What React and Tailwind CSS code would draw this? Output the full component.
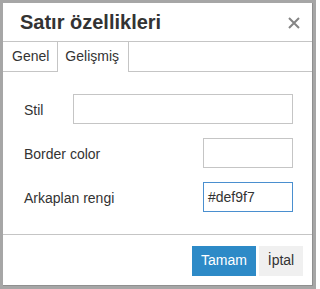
import React from "react";

export default function App() {
  return (
    <div className="w-[316px] h-[289px] bg-[#a6a6a6] p-[3px] font-['Liberation_Sans',Arial,sans-serif]">
      <div className="w-[310px] h-[283px] bg-white flex flex-col text-[#333] border-r border-b border-[#8f8f8f]">
        {/* Header */}
        <div className="h-[39px] shrink-0 flex items-center justify-between pl-[17px] pr-[12px] border-b border-[#c5c5c5]">
          <div className="text-[20px] font-bold leading-none text-[#333]">Satır özellikleri</div>
          <svg width="12" height="12" viewBox="0 0 12 12" className="mt-[1px]">
            <path d="M1 1 L11 11 M11 1 L1 11" stroke="#858585" strokeWidth="2" />
          </svg>
        </div>
        {/* Tabs */}
        <div className="h-[30px] shrink-0 flex">
          <div className="h-[30px] flex items-center pl-[9px] pr-[8px] border-r border-b border-[#c5c5c5] text-[14px]">Genel</div>
          <div className="h-[30px] flex items-center pl-[7px] pr-[9px] border-r border-[#c5c5c5] text-[14px] pb-[1px]">Gelişmiş</div>
          <div className="flex-1 h-[30px] border-b border-[#c5c5c5]"></div>
        </div>
        {/* Body */}
        <div className="flex-1 flex flex-col gap-[14px] pl-[21px] pr-[19px] pt-[22px] border-b border-[#c5c5c5]">
          <div className="flex items-center h-[30px]">
            <div className="w-[49px] text-[14px] pt-[2px]">Stil</div>
            <div className="flex-1 h-[30px] border border-[#c5c5c5]"></div>
          </div>
          <div className="flex items-center justify-between h-[30px]">
            <div className="text-[14px] pt-[2px]">Border color</div>
            <div className="w-[90px] h-[30px] border border-[#c5c5c5]"></div>
          </div>
          <div className="flex items-center justify-between h-[30px]">
            <div className="text-[14px] pt-[2px]">Arkaplan rengi</div>
            <div className="w-[90px] h-[30px] border border-[#4a8fcf] flex items-center pl-[4px] text-[14px] pt-[1px]">#def9f7</div>
          </div>
        </div>
        {/* Footer */}
        <div className="h-[50px] shrink-0 flex items-center justify-end gap-[3px] pr-[9px] pt-[1px]">
          <div className="w-[64px] h-[30px] bg-[#2d8ac7] text-white text-[14px] flex items-center justify-center">Tamam</div>
          <div className="w-[44px] h-[30px] bg-[#f0f0f0] text-[#333] text-[14px] flex items-center justify-center">İptal</div>
        </div>
      </div>
    </div>
  );
}
